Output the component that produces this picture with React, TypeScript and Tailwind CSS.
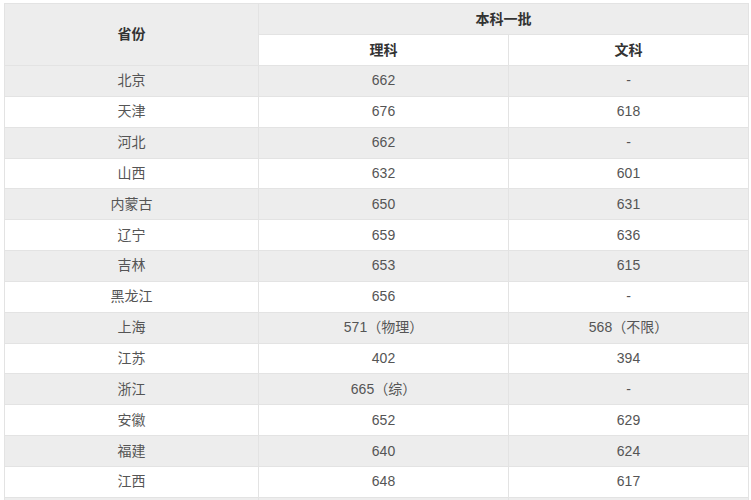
const ROWS: [string, string, string][] = [
  ["北京", "662", "-"],
  ["天津", "676", "618"],
  ["河北", "662", "-"],
  ["山西", "632", "601"],
  ["内蒙古", "650", "631"],
  ["辽宁", "659", "636"],
  ["吉林", "653", "615"],
  ["黑龙江", "656", "-"],
  ["上海", "571（物理）", "568（不限）"],
  ["江苏", "402", "394"],
  ["浙江", "665（综）", "-"],
  ["安徽", "652", "629"],
  ["福建", "640", "624"],
  ["江西", "648", "617"],
  ["", "", ""],
];

export default function App() {
  return (
    <div
      className="h-[500px] overflow-hidden bg-white pl-[4px] pt-[3px]"
      style={{ fontFamily: '"Liberation Sans", "Noto Sans CJK SC", sans-serif' }}
    >
      <table className="w-[744px] table-fixed border-collapse text-center text-[14px] text-[#555]">
        <colgroup>
          <col className="w-[254px]" />
          <col className="w-[250px]" />
          <col className="w-[240px]" />
        </colgroup>
        <thead className="font-bold text-[#333]">
          <tr className="h-[31px] bg-[#ededed]">
            <th rowSpan={2} className="border border-[#e3e3e3]">
              省份
            </th>
            <th colSpan={2} className="border border-[#e3e3e3]">
              本科一批
            </th>
          </tr>
          <tr className="h-[31px] bg-white">
            <th className="border border-[#e3e3e3]">理科</th>
            <th className="border border-[#e3e3e3]">文科</th>
          </tr>
        </thead>
        <tbody>
          {ROWS.map(([p, li, wen], i) => (
            <tr key={i} className={`h-[30.85px] ${i % 2 === 0 ? "bg-[#ededed]" : "bg-white"}`}>
              <td className="border border-[#e3e3e3] p-0">{p}</td>
              <td className="border border-[#e3e3e3] p-0">{li}</td>
              <td className="border border-[#e3e3e3] p-0">{wen}</td>
            </tr>
          ))}
        </tbody>
      </table>
    </div>
  );
}
